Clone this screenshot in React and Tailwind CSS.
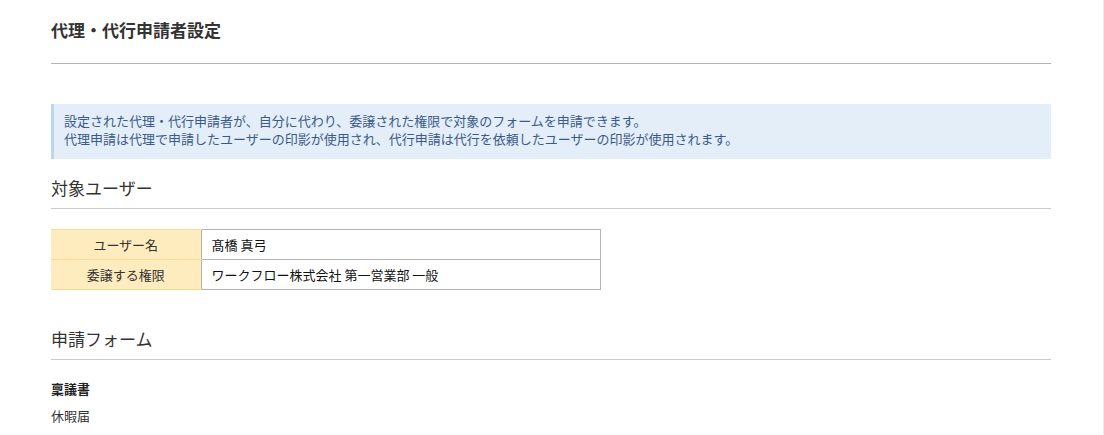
import React from 'react';

const font = { fontFamily: '"Noto Sans CJK JP", "Noto Sans", sans-serif' };

const SectionHeading = ({ children }) => (
  <div className="border-b border-[#cccccc] pb-2">
    <h2 className="text-[17px] leading-6 font-normal text-[#333333]">{children}</h2>
  </div>
);

const rows = [
  { label: 'ユーザー名', value: '髙橋 真弓' },
  { label: '委譲する権限', value: 'ワークフロー株式会社 第一営業部 一般' },
];

const forms = [
  { name: '稟議書', bold: true },
  { name: '休暇届', bold: false },
];

const App = () => {
  return (
    <div className="w-full min-h-[435px] bg-white border-r border-[#ececec]" style={font}>
      <div className="w-[1000px] ml-[51px] pt-[18px]">
        <h1 className="text-[17px] leading-6 font-bold text-[#333333]">代理・代行申請者設定</h1>
        <div className="mt-[21px] border-t border-[#b3b3b3]"></div>

        <div className="mt-[40px] bg-[#e3eef9] border-l-[3px] border-[#bcd6ef] pl-[10px] pt-2 pb-[11px] text-[13px] leading-[18px] text-[#3c5a88]">
          <p>設定された代理・代行申請者が、自分に代わり、委譲された権限で対象のフォームを申請できます。</p>
          <p>代理申請は代理で申請したユーザーの印影が使用され、代行申請は代行を依頼したユーザーの印影が使用されます。</p>
        </div>

        <div className="mt-[17px]">
          <SectionHeading>対象ユーザー</SectionHeading>
        </div>

        <table className="mt-[20px] w-[550px] border-collapse text-[13px] text-[#333333]">
          <tbody>
            {rows.map((r) => (
              <tr key={r.label} className="h-[30px]">
                <th className="w-[150px] bg-[#feebbe] border-y border-[#f6dc95] font-normal text-center align-middle">
                  {r.label}
                </th>
                <td className="border border-[#b3b3b3] pl-[10px] align-middle text-[#111111]">{r.value}</td>
              </tr>
            ))}
          </tbody>
        </table>

        <div className="mt-[37px]">
          <SectionHeading>申請フォーム</SectionHeading>
        </div>

        <ul className="mt-[15px] text-[13px] leading-[27px]">
          {forms.map((f) => (
            <li key={f.name} className={f.bold ? 'font-bold text-[#222222]' : 'text-[#333333]'}>
              {f.name}
            </li>
          ))}
        </ul>
      </div>
    </div>
  );
};

export default App;
